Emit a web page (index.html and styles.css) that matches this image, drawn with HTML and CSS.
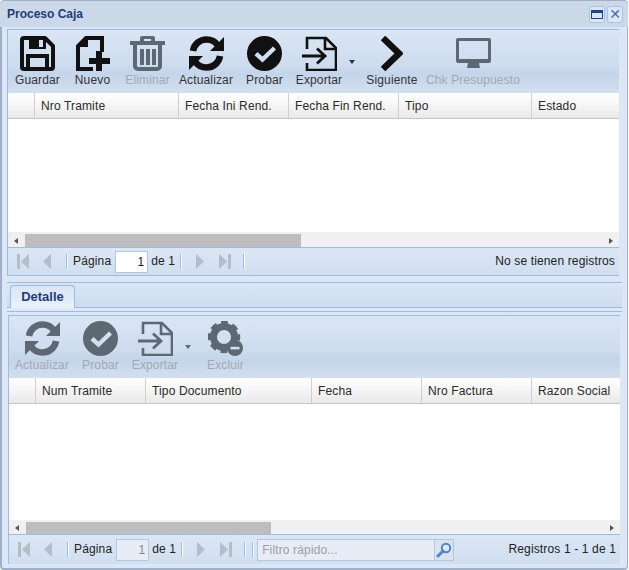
FILE: index.html
```html
<!DOCTYPE html>
<html lang="es">
<head>
<meta charset="utf-8">
<title>Proceso Caja</title>
<link rel="stylesheet" href="styles.css">
</head>
<body>
<svg class="defs" width="0" height="0" aria-hidden="true">
  <defs>
    <symbol id="i-save" viewBox="0 0 35 35">
      <path fill="none" stroke="currentColor" stroke-width="4" stroke-linejoin="round" d="M2 4a2 2 0 0 1 2-2h21l8 8v21a2 2 0 0 1-2 2H4a2 2 0 0 1-2-2z"/>
      <path fill="currentColor" d="M9 2h17v11H9z"/>
      <path fill="#d3e0f1" d="M19 4h4v7h-4z"/>
      <path fill="none" stroke="currentColor" stroke-width="4" d="M8 33V20h19v13"/>
    </symbol>
    <symbol id="i-new" viewBox="0 0 35 35">
      <path fill="none" stroke="currentColor" stroke-width="4" d="M18 33H3V10l8-8h16v14"/>
      <path fill="currentColor" d="M2 11h11V2h-2L2 9z"/>
      <path fill="currentColor" d="M21 15h6v7h8v6h-8v7h-6v-7h-7v-6h7z"/>
    </symbol>
    <symbol id="i-trash" viewBox="0 0 35 35">
      <path fill="currentColor" d="M12 0h11a2 2 0 0 1 2 2v3h10v4H0V5h10V2a2 2 0 0 1 2-2zm2 3v2h7V3z"/>
      <path fill="none" stroke="currentColor" stroke-width="4" d="M5 9v21a3 3 0 0 0 3 3h19a3 3 0 0 0 3-3V9"/>
      <path fill="currentColor" d="M10 13h4v16h-4zM16 13h4v16h-4zM22 13h4v16h-4z"/>
    </symbol>
    <symbol id="i-refresh" viewBox="0 0 35 35">
      <path fill="none" stroke="currentColor" stroke-width="6.5" d="M4 15C5 8 11 3.500 17.500 3.500c5 0 9 2.500 11 5.500"/>
      <path fill="currentColor" d="M35 1v14H21z"/>
      <path fill="none" stroke="currentColor" stroke-width="6.500" d="M31 20c-1 7-7 11.500-13.500 11.500-5 0-9-2.500-11-5.500"/>
      <path fill="currentColor" d="M0 34V20h14z"/>
    </symbol>
    <symbol id="i-check" viewBox="0 0 35 35">
      <path fill="currentColor" fill-rule="evenodd" d="M17.500 0a17.500 17.500 0 1 1 0 35 17.500 17.500 0 0 1 0-35zM26 10.500l-10.500 10-5-4.500-3 3.200 8 7.300 13.500-13z"/>
    </symbol>
    <symbol id="i-export" viewBox="0 0 35 35">
      <path fill="none" stroke="currentColor" stroke-width="2.600" d="M5 13V2h19l10 10v22H5v-7"/>
      <path fill="none" stroke="currentColor" stroke-width="2.600" d="M23 2v11h11"/>
      <path fill="none" stroke="currentColor" stroke-width="2.800" d="M0 20h23M15 12.500l8 7.500-8 7.500"/>
    </symbol>
    <symbol id="i-next" viewBox="0 0 22 35">
      <path fill="none" stroke="currentColor" stroke-width="6.500" d="M2 2l16 15.500L2 33"/>
    </symbol>
    <symbol id="i-monitor" viewBox="0 0 35 30">
      <path fill="currentColor" fill-rule="evenodd" d="M2 0h31a2 2 0 0 1 2 2v21a2 2 0 0 1-2 2H2a2 2 0 0 1-2-2V2a2 2 0 0 1 2-2zm1 3v18h29V3zM12 25h11l1 5H11z"/>
    </symbol>
    <symbol id="i-gear" viewBox="0 0 35 35">
      <circle cx="16" cy="16" r="10.500" fill="none" stroke="currentColor" stroke-width="7"/>
      <circle cx="16" cy="16" r="14" fill="none" stroke="currentColor" stroke-width="4.500" stroke-dasharray="6.500 4.500" stroke-dashoffset="3.250"/>
      <circle cx="27" cy="27" r="8" fill="currentColor"/>
      <path fill="#d3e0f1" d="M22.500 25.800h9v2.600h-9z"/>
    </symbol>
    <symbol id="i-first" viewBox="0 0 12 15">
      <path fill="currentColor" d="M0 0h3v15H0zM12 0v15L4 7.500z"/>
    </symbol>
    <symbol id="i-prev" viewBox="0 0 9 15">
      <path fill="currentColor" d="M8 0v15L0 7.500z"/>
    </symbol>
    <symbol id="i-nxt" viewBox="0 0 9 15">
      <path fill="currentColor" d="M1 0v15l8-7.500z"/>
    </symbol>
    <symbol id="i-last" viewBox="0 0 12 15">
      <path fill="currentColor" d="M12 0H9v15h3zM0 0v15l8-7.500z"/>
    </symbol>
  </defs>
</svg>

<main class="window">
  <header class="titlebar">
    <h1 class="title">Proceso Caja</h1>
    <div class="tools">
      <button class="tool" type="button" aria-label="Maximizar"><span class="tool-max"></span></button>
      <button class="tool tool-x" type="button" aria-label="Cerrar">✕</button>
    </div>
  </header>

  <section class="panel panel-top">
    <div class="toolbar tb-top">
      <div class="btn b-guardar"><svg class="ic"><use href="#i-save"/></svg><span>Guardar</span></div>
      <div class="btn b-nuevo"><svg class="ic"><use href="#i-new"/></svg><span>Nuevo</span></div>
      <div class="btn b-eliminar off"><svg class="ic"><use href="#i-trash"/></svg><span>Eliminar</span></div>
      <div class="btn b-actualizar"><svg class="ic"><use href="#i-refresh"/></svg><span>Actualizar</span></div>
      <div class="btn b-probar"><svg class="ic"><use href="#i-check"/></svg><span>Probar</span></div>
      <div class="btn b-exportar"><svg class="ic"><use href="#i-export"/></svg><span>Exportar</span><i class="caret"></i></div>
      <div class="btn b-siguiente"><svg class="ic ic-next"><use href="#i-next"/></svg><span>Siguiente</span></div>
      <div class="btn b-chk off"><svg class="ic ic-mon"><use href="#i-monitor"/></svg><span>Chk Presupuesto</span></div>
    </div>
    <div class="head head-top">
      <div class="hc"></div>
      <div class="hc">Nro Tramite</div>
      <div class="hc">Fecha Ini Rend.</div>
      <div class="hc">Fecha Fin Rend.</div>
      <div class="hc">Tipo</div>
      <div class="hc">Estado</div>
    </div>
    <div class="gridbody body-top"></div>
    <div class="hscroll hscroll-top">
      <i class="arr arr-l"></i>
      <div class="track"><div class="thumb thumb-top"></div></div>
      <i class="arr arr-r"></i>
    </div>
    <div class="paging">
      <svg class="pg pg-first"><use href="#i-first"/></svg>
      <svg class="pg pg-prev"><use href="#i-prev"/></svg>
      <i class="sep sep-a"></i>
      <span class="pg-label">Página</span>
      <input class="pg-input" type="text" value="1" aria-label="Página">
      <span class="pg-of">de 1</span>
      <i class="sep sep-b"></i>
      <svg class="pg pg-next"><use href="#i-nxt"/></svg>
      <svg class="pg pg-last"><use href="#i-last"/></svg>
      <i class="sep sep-c"></i>
      <span class="pg-info">No se tienen registros</span>
    </div>
  </section>

  <section class="panel panel-low">
    <div class="tabbar"><div class="tab">Detalle</div></div>
    <div class="tabstrip"></div>
    <div class="tabbody">
      <div class="toolbar tb-low">
        <div class="btn l-actualizar off"><svg class="ic"><use href="#i-refresh"/></svg><span>Actualizar</span></div>
        <div class="btn l-probar off"><svg class="ic"><use href="#i-check"/></svg><span>Probar</span></div>
        <div class="btn l-exportar off"><svg class="ic"><use href="#i-export"/></svg><span>Exportar</span><i class="caret"></i></div>
        <div class="btn l-excluir off"><svg class="ic"><use href="#i-gear"/></svg><span>Excluir</span></div>
      </div>
      <div class="head head-low">
        <div class="hc"></div>
        <div class="hc">Num Tramite</div>
        <div class="hc">Tipo Documento</div>
        <div class="hc">Fecha</div>
        <div class="hc">Nro Factura</div>
        <div class="hc">Razon Social</div>
      </div>
      <div class="gridbody body-low"></div>
      <div class="hscroll hscroll-low">
        <i class="arr arr-l"></i>
        <div class="track"><div class="thumb thumb-low"></div></div>
        <i class="arr arr-r"></i>
      </div>
      <div class="paging paging-low">
        <svg class="pg pg-first"><use href="#i-first"/></svg>
        <svg class="pg pg-prev"><use href="#i-prev"/></svg>
        <i class="sep sep-a"></i>
        <span class="pg-label">Página</span>
        <input class="pg-input pg-input-off" type="text" value="1" aria-label="Página">
        <span class="pg-of">de 1</span>
        <i class="sep sep-b"></i>
        <svg class="pg pg-next"><use href="#i-nxt"/></svg>
        <svg class="pg pg-last"><use href="#i-last"/></svg>
        <i class="sep sep-c"></i>
        <i class="sep sep-d"></i>
        <div class="search">
          <input class="search-input" type="text" placeholder="Filtro rápido..." aria-label="Filtro rápido">
          <span class="search-btn">
            <svg width="16" height="16" viewBox="0 0 16 16"><circle cx="10" cy="6" r="4.200" fill="#dfe9f6" stroke="#4f86c6" stroke-width="2"/><path d="M7 9l-5 5" stroke="#4f86c6" stroke-width="3" stroke-linecap="round"/></svg>
          </span>
        </div>
        <span class="pg-info">Registros 1 - 1 de 1</span>
      </div>
    </div>
  </section>
</main>
</body>
</html>
```

FILE: styles.css
```css
* { box-sizing: border-box; }
html, body { margin: 0; padding: 0; background: #fff; }
body { width: 629px; height: 570px; overflow: hidden; font: 12px/15px "Liberation Sans", Arial, sans-serif; letter-spacing: .14px; color: #222; }
.defs { position: absolute; }

.window {
  width: 628px; height: 570px;
  display: flex; flex-direction: column;
  background: #dce6f4;
  border: 1px solid #9fb0c8;
  border-left-width: 2px;
  border-bottom-width: 2px;
  border-radius: 4px;
}
.titlebar {
  flex: none; height: 26px;
  margin: 0 -1px 0 -2px;
  padding: 0 5px 0 7px;
  display: flex; align-items: center; justify-content: space-between;
  background: #cbd8e8;
  border-radius: 4px 4px 0 0;
}
.title { margin: 0; font: bold 12px/15px "Liberation Sans", Arial, sans-serif; letter-spacing: 0; color: #1e3c7a; }
.tools { display: flex; gap: 2px; }
.tool {
  width: 16px; height: 17px; padding: 0;
  display: flex; align-items: center; justify-content: center;
  background: #dbe7f8; border: 1px solid #a8c4ea; border-radius: 3px;
  font: 14px/14px "DejaVu Sans", sans-serif; color: #3f6db0;
}
.tool-max { width: 12px; height: 9px; border: 1px solid #1e4488; border-top-width: 3px; }

.panel { flex: none; margin-left: 5px; }
.panel-top { margin-top: 2px; width: 612px; height: 247px; border-bottom: 1px solid #99bce8; display: flex; flex-direction: column; border-left: 1px solid #99bce8; }
.panel-low { margin-top: 6px; width: 615px; display: flex; flex-direction: column; }

.toolbar {
  flex: none; display: flex; align-items: flex-start;
  background: linear-gradient(#dae6f5 0%, #cddcee 55%, #c4d5ea 70%, #d1dff0 100%);
  border-top: 1px solid #99bce8;
}
.tb-top { height: 64px; padding: 6px 0 0 7px; }
.tb-low { height: 63px; padding: 5px 0 0 6px; }

.btn { position: relative; display: flex; flex-direction: column; align-items: center; color: #333; }
.btn span { margin-top: 2px; white-space: nowrap; }
.ic { width: 35px; height: 35px; color: #111; display: block; }
.ic-next { width: 22px; }
.ic-mon { height: 30px; margin: 2px 0 3px; }
.off { color: #a2a9b1; }
.off .ic { color: #5e6873; }
.b-guardar { width: 45px; }
.b-nuevo { margin-left: 15px; width: 35px; }
.b-eliminar { margin-left: 15px; width: 45px; }
.b-actualizar { margin-left: 9px; width: 54px; }
.b-probar { margin-left: 13px; width: 37px; }
.b-exportar { margin-left: 13px; width: 46px; }
.b-siguiente { margin-left: 24px; width: 52px; }
.b-chk { margin-left: 8px; width: 94px; }
.caret {
  position: absolute; left: 53px; top: 24px;
  border: 3px solid transparent; border-top: 4px solid #333; border-bottom: 0;
}
.off .caret { border-top-color: #5e6873; }
.l-actualizar { width: 54px; }
.l-probar { margin-left: 13px; width: 37px; }
.l-exportar { margin-left: 13px; width: 46px; }
.l-excluir { margin-left: 29px; width: 37px; }

.head {
  flex: none; height: 26px; display: grid;
  background: linear-gradient(#fff, #f9f9f9 30%, #e9e9e9);
  border-bottom: 1px solid #c5c5c5;
}
.head-top { grid-template-columns: 27px 144px 110px 110px 133px 1fr; }
.head-low { grid-template-columns: 27px 110px 166px 110px 110px 1fr; }
.hc { padding: 6px 6px 0; border-right: 1px solid #cfcfcf; color: #2a2a2a; white-space: nowrap; }
.hc:last-child { border-right: 0; }

.gridbody { flex: none; background: #fff; }
.body-top { height: 113px; }
.body-low { height: 116px; }

.hscroll { flex: none; display: flex; background: #f0f0f0; }
.hscroll-top { height: 15px; }
.hscroll-low { height: 14px; }
.track { flex: 1; padding-top: 2px; }
.thumb { height: 100%; background: #bdbdbd; margin-left: 1px; }
.thumb-top { width: 276px; }
.thumb-low { width: 245px; }
.arr { flex: none; width: 16px; padding-top: 2px; display: flex; justify-content: center; align-items: center; }
.arr::before { content: ""; border: 3px solid transparent; }
.arr-l::before { border-right: 4px solid #555; border-left: 0; }
.arr-r::before { border-left: 4px solid #555; border-right: 0; }

.paging {
  flex: none; height: 28px; display: flex; align-items: center;
  padding: 0 4px 0 9px;
  background: linear-gradient(#dce7f5, #d0deef);
  border-top: 1px solid #99bce8;
}
.paging-low { height: 30px; }
.pg { flex: none; height: 15px; color: #b4bdc8; display: block; }
.pg-first, .pg-last { width: 12px; }
.pg-prev, .pg-next { width: 9px; }
.pg-prev { margin-left: 14px; }
.pg-last { margin-left: 15px; }
.sep { flex: none; width: 2px; height: 15px; background: #fff; border-left: 1px solid #99bce8; }
.sep-a { margin: 0 5px 0 14px; }
.sep-b { margin: 0 13px 0 5px; }
.sep-c { margin-left: 12px; }
.sep-d { margin-left: 6px; }
.pg-label { margin-right: 4px; }
.pg-input {
  width: 33px; height: 22px; padding: 0 3px; margin: 0;
  font: 12px "Liberation Sans", Arial, sans-serif; color: #222; text-align: right;
  background: #fff; border: 1px solid #b5c7de; outline: 0;
}
.pg-input-off { background: #e6edf7; color: #888; }
.pg-of { margin-left: 3px; }
.pg-info { margin-left: auto; }

.search { display: flex; margin-left: 3px; }
.search-input {
  width: 177px; height: 22px; padding: 0 4px; margin: 0;
  font: 12px "Liberation Sans", Arial, sans-serif; letter-spacing: .14px;
  background: #e6edf7; border: 1px solid #b5c7de; border-right: 0; outline: 0;
}
.search-input::placeholder { color: #a0a0a0; opacity: 1; }
.search-btn {
  width: 20px; height: 22px; display: flex; align-items: center; justify-content: center;
  background: #d9e2ee; border: 1px solid #b5c7de;
}

.tabbar {
  flex: none; height: 26px; padding: 2px 0 0 3px;
  background: linear-gradient(#dae6f5, #cddcee);
  border-top: 1px solid #99bce8; border-bottom: 1px solid #99bce8;
}
.tab {
  width: 65px; height: 23px; text-align: center;
  font: bold 13px/21px "Liberation Sans", Arial, sans-serif; letter-spacing: 0; color: #1e3c7a;
  background: linear-gradient(#d8e5f6, #e9f1fb);
  border: 1px solid #99bce8; border-bottom: 0; border-radius: 4px 4px 0 0;
}
.tabstrip { flex: none; height: 4px; background: #dfe8f6; border-bottom: 1px solid #99bce8; }
.tabbody { flex: none; width: 612px; margin: 3px 0 0 1px; border-left: 1px solid #99bce8; }
```
